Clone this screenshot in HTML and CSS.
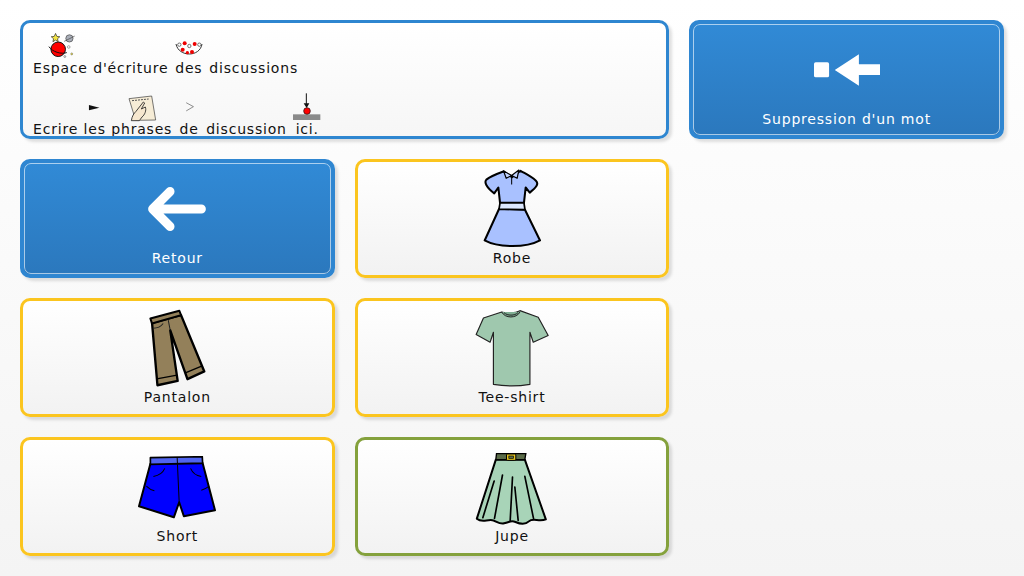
FILE: index.html
```html
<!DOCTYPE html>
<html lang="fr">

<head>
    <meta charset="UTF-8">
    <title>Discussion</title>
    <link rel="stylesheet" href="styles.css">
</head>

<body>
    <div class="board">
        <!-- zone de texte -->
        <div class="card writing">
            <div class="line">
                <div class="word">
                    <svg class="sym" width="33" height="29" viewBox="95 60 100 87">
                        <path d="M130 70l4 9 9 1-7 6 2 9-8-5-8 5 2-9-7-6 9-1z" fill="#f5e642" stroke="#222" stroke-width="2"/>
                        <circle cx="172" cy="85" r="11" fill="#a9aeb8" stroke="#444" stroke-width="2"/>
                        <path d="M156 94l32-16" stroke="#444" stroke-width="2"/>
                        <circle cx="138" cy="118" r="22" fill="#f00" stroke="#111" stroke-width="3"/>
                        <path d="M110 110c10 16 38 24 54 18" fill="none" stroke="#111" stroke-width="3"/>
                        <circle cx="170" cy="111" r="4" fill="#fff" stroke="#555" stroke-width="1.5"/>
                        <circle cx="179" cy="132" r="3" fill="#f5e642" stroke="#555" stroke-width="1.5"/>
                        <circle cx="158" cy="140" r="3" fill="#ddd" stroke="#555" stroke-width="1.5"/>
                    </svg>
                    <span>Espace</span>
                </div>
                <div class="word"><i class="sym"></i><span>d'écriture</span></div>
                <div class="word">
                    <svg class="sym" width="30" height="29" viewBox="490 60 90 87">
                        <path d="M496 102c8 40 72 40 78 0" fill="#fff" stroke="#333" stroke-width="3"/>
                        <circle cx="522" cy="100" r="6" fill="#e00"/><circle cx="552" cy="102" r="6" fill="#e00"/>
                        <circle cx="516" cy="119" r="6" fill="#e00"/><circle cx="544" cy="126" r="6" fill="#e00"/>
                        <circle cx="530" cy="128" r="5" fill="#e00"/><circle cx="536" cy="108" r="5" fill="#fff" stroke="#333" stroke-width="2"/>
                        <circle cx="506" cy="104" r="5" fill="#fff" stroke="#333" stroke-width="2"/><circle cx="566" cy="104" r="5" fill="#fff" stroke="#333" stroke-width="2"/>
                    </svg>
                    <span>des</span>
                </div>
                <div class="word"><i class="sym"></i><span>discussions</span></div>
            </div>
            <div class="line">
                <div class="word"><i class="sym"></i><span>Ecrire</span></div>
                <div class="word">
                    <svg class="sym" width="21" height="29" viewBox="225 243 64 87">
                        <path d="M240 285l32 8-32 8z" fill="#111"/>
                    </svg>
                    <span>les</span>
                </div>
                <div class="word">
                    <svg class="sym" width="30" height="29" viewBox="355 243 90 87">
                        <path d="M361 266l68-8 12 72-60 1z" fill="#f6ecd6" stroke="#333" stroke-width="2"/>
                        <path d="M370 272l50-5" stroke="#555" stroke-width="3" stroke-dasharray="6 3"/>
                        <path d="M368 332c2-14 8-22 14-28l22-28 4 3-10 18 12-6c4 10-2 24-10 30l-8 11z" fill="#f6e7cf" stroke="#222" stroke-width="2.5"/>
                    </svg>
                    <span>phrases</span>
                </div>
                <div class="word">
                    <svg class="sym" width="23" height="29" viewBox="505 243 70 87">
                        <path d="M530 278l22 12-22 13" fill="none" stroke="#555" stroke-width="2"/>
                    </svg>
                    <span>de</span>
                </div>
                <div class="word"><i class="sym"></i><span>discussion</span></div>
                <div class="word">
                    <svg class="sym" width="30" height="29" viewBox="842 243 90 87">
                        <path d="M885 250v36" stroke="#111" stroke-width="3"/>
                        <path d="M877 280h17l-8 14z" fill="#111"/>
                        <rect x="845" y="313" width="82" height="17" fill="#8a8a8a"/>
                        <circle cx="887" cy="303" r="10" fill="#f00" stroke="#111" stroke-width="2"/>
                    </svg>
                    <span>ici.</span>
                </div>
            </div>
        </div>

        <div class="card blue">
            <div class="inner">
                <svg class="pic" width="68" height="34" viewBox="400 130 203 100">
                    <rect x="403" y="157" width="45" height="45" rx="5" fill="#fff"/>
                    <path d="M465 180l72-47v30h63v32h-63v32z" fill="#fff"/>
                </svg>
                <span class="label">Suppression d'un mot</span>
            </div>
        </div>

        <div class="card blue first">
            <div class="inner">
                <svg class="pic" width="66" height="50" viewBox="401 102 200 150">
                    <path d="M575 177H428M480 124l-53 53 53 53" fill="none" stroke="#fff" stroke-width="27" stroke-linecap="round" stroke-linejoin="round"/>
                </svg>
                <span class="label">Retour</span>
            </div>
        </div>

        <div class="card">
            <svg class="pic" width="62" height="82" viewBox="120 25 180 240">
                <path d="M172 148L130 240c40 22 122 22 162 0L248 150z" fill="#a9c1ff" stroke="#000" stroke-width="6" stroke-linejoin="round"/>
                <path d="M185 38c-20 7-35 12-50 24-7 8 0 23 23 40l12-17 5 45h70l5-45 12 15c18-15 28-25 18-35-15-13-30-20-45-29l-25 19z" fill="#a9c1ff" stroke="#000" stroke-width="6" stroke-linejoin="round"/>
                <path d="M175 130l-3 18 76 2-3-20z" fill="#dce8ff" stroke="#000" stroke-width="5"/>
                <path d="M185 36l8 22 16-8 16 8 5-24-21 16z" fill="#c4d4ff" stroke="#000" stroke-width="3.5" stroke-linejoin="round"/>
                <path d="M209 52v24" stroke="#000" stroke-width="3"/>
            </svg>
            <span class="label">Robe</span>
        </div>

        <div class="card first">
            <svg class="pic" width="59" height="80" viewBox="90 25 175 235">
                <path d="M102 68l16 185 60-13-22-150 51 145 50-23-69-167z" fill="#93805a" stroke="#000" stroke-width="7" stroke-linejoin="round"/>
                <path d="M97 55l86-23 5 13-86 25z" fill="#93805a" stroke="#000" stroke-width="6" stroke-linejoin="round"/>
                <path d="M116 234l60-11M199 217l50-21" stroke="#000" stroke-width="4"/>
                <path d="M150 60l6 30M105 84c14 0 24-6 30-14" fill="none" stroke="#222" stroke-width="3"/>
            </svg>
            <span class="label">Pantalon</span>
        </div>

        <div class="card">
            <svg class="pic tee" width="74" height="78" viewBox="75 25 222 235">
                <path d="M155 34l-55 18-22 50 42 23 10-30v157c35 6 75 6 110 0V95l10 30 45-20-30-55-55-20c-15 8-40 8-55 4z" fill="#9fc8ae" stroke="#222" stroke-width="3.5" stroke-linejoin="round"/>
                <path d="M155 34c10 20 45 20 55 0M162 36c10 10 32 10 42 0" fill="#7fae93" stroke="#222" stroke-width="3"/>
            </svg>
            <span class="label">Tee-shirt</span>
        </div>

        <div class="card first">
            <svg class="pic short" width="78" height="63" viewBox="55 45 233 188">
                <path d="M92 68L58 195l104 33 16-45 14 42 93-18-37-141z" fill="#00f" stroke="#000" stroke-width="6" stroke-linejoin="round"/>
                <path d="M92 50l155-3 1 19-156 4z" fill="#5064f0" stroke="#000" stroke-width="5" stroke-linejoin="round"/>
                <path d="M172 50l6 133M135 82c-6 14-20 22-34 24M212 82c6 14 18 22 32 24M80 135c8 8 16 12 24 14M268 135c-8 6-14 10-24 12" fill="none" stroke="#000" stroke-width="3"/>
            </svg>
            <span class="label">Short</span>
        </div>

        <div class="card olive">
            <svg class="pic" width="73" height="75" viewBox="73 35 218 225">
                <path d="M135 58L78 235c14 12 26 4 42 4s22 14 40 10 20-10 34-4 28 10 40-2 30 2 51-6L222 58z" fill="#a8d4b8" stroke="#000" stroke-width="6" stroke-linejoin="round"/>
                <path d="M137 40h88l-3 18h-87z" fill="#5a6b48" stroke="#000" stroke-width="4"/>
                <rect x="167" y="41" width="28" height="19" rx="3" fill="#e8c820" stroke="#000" stroke-width="3"/>
                <rect x="174" y="47" width="14" height="7" fill="#5a6b48" stroke="#000" stroke-width="2"/>
                <path d="M130 122l-34 110M155 104l-24 130M185 110l-7 132M192 140l10 100M222 108l26 126" fill="none" stroke="#000" stroke-width="5" stroke-linecap="round"/>
            </svg>
            <span class="label">Jupe</span>
        </div>
    </div>
</body>

</html>
```

FILE: styles.css
```css
html,
body {
    height: 100%;
}

body {
    margin: 0;
    background: linear-gradient(#ffffff, #f4f4f4);
    font-family: "DejaVu Sans", sans-serif;
    font-size: 14px;
    letter-spacing: 0.8px;
    color: #111;
}

.board {
    display: grid;
    grid-template-columns: repeat(3, 1fr);
    grid-template-rows: repeat(4, 119px);
    gap: 20px;
    padding: 20px;
    box-sizing: border-box;
    height: 576px;
}

.card {
    display: flex;
    flex-direction: column;
    align-items: center;
    justify-content: flex-end;
    box-sizing: border-box;
    padding-bottom: 8px;
    border: 3px solid #fbc51f;
    border-radius: 10px;
    background: linear-gradient(#ffffff, #f2f2f2);
    box-shadow: 3px 3px 3px rgba(0, 0, 0, 0.12);
    overflow: hidden;
}

.first {
    grid-column: 1;
}

.olive {
    border-color: #84a13c;
}

.pic {
    display: block;
}

.short {
    margin-bottom: 8px;
}

.tee {
    margin-bottom: 1px;
}

.label {
    line-height: 18px;
}

.writing {
    grid-column: span 2;
    align-items: flex-start;
    justify-content: flex-start;
    padding: 7px 10px 0;
    border-color: #2e86d0;
    background: linear-gradient(#ffffff, #f6f6f6);
}

.line {
    display: flex;
    flex: none;
    gap: 5.5px;
    margin-bottom: 14px;
}

.word {
    display: flex;
    flex-direction: column;
    align-items: center;
    line-height: 18px;
}

.sym {
    display: block;
    height: 29px;
    overflow: visible;
}

.blue {
    padding: 0;
    border-width: 4px;
    border-color: #2f86d1;
    background: linear-gradient(#318ad6, #2b78bd);
    color: #fff;
}

.inner {
    display: flex;
    flex-direction: column;
    align-items: center;
    align-self: stretch;
    flex: 1;
    padding: 5px 0 6px;
    border: 1px solid rgba(255, 255, 255, 0.6);
    border-radius: 7px;
}

.inner .pic {
    margin: auto;
}
```
